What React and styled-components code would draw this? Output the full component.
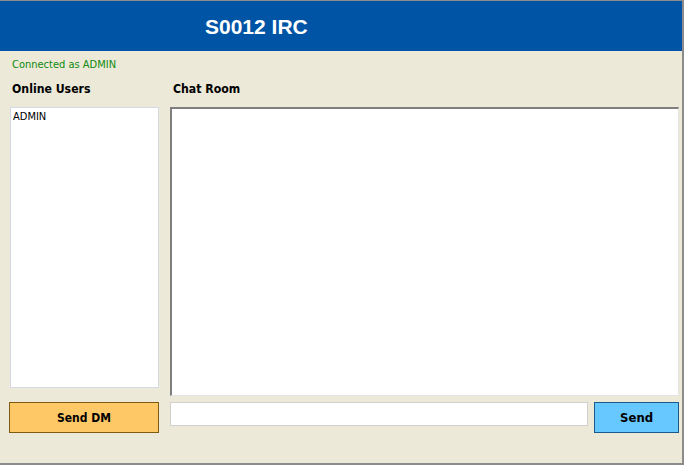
import React, { useState } from 'react';
import styled, { createGlobalStyle } from 'styled-components';

const GlobalStyle = createGlobalStyle`
  html, body {
    margin: 0;
    padding: 0;
    background: #ffffff;
  }
`;

const Window = styled.div`
  width: 684px;
  height: 465px;
  box-sizing: border-box;
  border-top: 1px solid #8c8c8c;
  border-right: 2px solid #8c8c8c;
  border-bottom: 2px solid #8c8c8c;
  background: #ece9d8;
  display: flex;
  flex-direction: column;
  font-family: "DejaVu Sans Condensed", "DejaVu Sans", sans-serif;
`;

const Header = styled.div`
  height: 50px;
  background: #0054a6;
  display: flex;
  align-items: center;
  padding-left: 205px;
`;

const Title = styled.h1`
  margin: 0;
  color: #ffffff;
  font-family: "Liberation Sans", Arial, sans-serif;
  font-weight: bold;
  font-size: 21px;
  padding-top: 1px;
`;

const Status = styled.div`
  color: #108a10;
  font-size: 11px;
  margin: 7px 0 0 12px;
  height: 14px;
`;

const Main = styled.div`
  display: grid;
  grid-template-columns: 150px 509px;
  grid-template-rows: 19px 289px 36px;
  column-gap: 11px;
  row-gap: 6px;
  padding-left: 9px;
  margin-top: 10px;
`;

const Label = styled.div`
  font-weight: bold;
  font-size: 12.2px;
  color: #000;
  padding-left: ${p => p.$inset}px;
  align-self: start;
  line-height: 15px;
`;

const UserList = styled.ul`
  list-style: none;
  margin: 0 0 0 1px;
  padding: 2px 2px;
  height: 281px;
  box-sizing: border-box;
  background: #fff;
  border: 1px solid #d3dae6;
  font-size: 11px;
`;

const UserItem = styled.li`
  line-height: 13px;
  color: #000;
`;

const ChatBox = styled.div`
  background: #fff;
  box-sizing: border-box;
  border-top: 2px solid #7f7f7f;
  border-left: 2px solid #7f7f7f;
  border-right: 1px solid #e4e4e4;
  border-bottom: 1px solid #e4e4e4;
`;

const Button = styled.button`
  width: ${p => p.$w}px;
  height: 31px;
  background: ${p => p.$bg};
  border: 1px solid ${p => p.$edge};
  font-family: "DejaVu Sans Condensed", "DejaVu Sans", sans-serif;
  font-weight: bold;
  font-size: ${p => p.$size}px;
  color: #000;
  padding: 0;
  cursor: pointer;
`;

const SendRow = styled.div`
  display: flex;
  gap: 6px;
  align-items: flex-start;
`;

const Input = styled.input`
  width: 419px;
  height: 24px;
  box-sizing: border-box;
  border: 1px solid #cfcfcf;
  background: #fff;
  outline: none;
  font-size: 11px;
`;

export default function App() {
  const [msg, setMsg] = useState('');
  const users = ['ADMIN'];

  return (
    <>
      <GlobalStyle />
      <Window>
        <Header>
          <Title>S0012 IRC</Title>
        </Header>
        <Status>Connected as ADMIN</Status>
        <Main>
          <Label $inset={3}>Online Users</Label>
          <Label $inset={3}>Chat Room</Label>
          <UserList>
            {users.map(u => (
              <UserItem key={u}>{u}</UserItem>
            ))}
          </UserList>
          <ChatBox />
          <Button $w={150} $bg="#ffc867" $edge="#7f5a12" $size={12}>Send DM</Button>
          <SendRow>
            <Input value={msg} onChange={e => setMsg(e.target.value)} />
            <Button $w={85} $bg="#66c8ff" $edge="#1c5a8c" $size={13}>Send</Button>
          </SendRow>
        </Main>
      </Window>
    </>
  );
}
